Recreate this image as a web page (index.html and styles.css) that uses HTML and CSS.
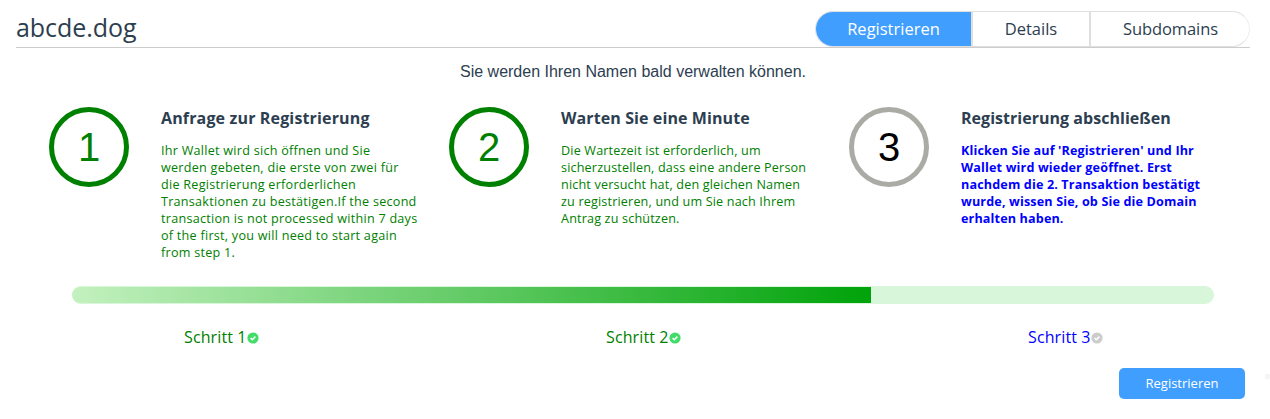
FILE: index.html
```html
<!DOCTYPE html>
<html lang="de">
<head>
<meta charset="utf-8">
<title>abcde.dog</title>
<link rel="stylesheet" href="styles.css">
</head>
<body>
<header class="header">
  <h1 class="domain">abcde.dog</h1>
  <nav class="tabs">
    <a class="tab tab-register">Registrieren</a>
    <a class="tab tab-details">Details</a>
    <a class="tab tab-subdomains">Subdomains</a>
  </nav>
</header>
<main>
  <p class="intro">Sie werden Ihren Namen bald verwalten können.</p>
  <section class="steps">
    <article class="step done request">
      <div class="number">1</div>
      <div class="info">
        <h2 class="title">Anfrage zur Registrierung</h2>
        <p class="text">Ihr Wallet wird sich öffnen und Sie<br>werden gebeten, die erste von zwei für<br>die Registrierung erforderlichen<br>Transaktionen zu bestätigen.If the second<br>transaction is not processed within 7 days<br>of the first, you will need to start again<br>from step 1.</p>
      </div>
    </article>
    <article class="step done">
      <div class="number">2</div>
      <div class="info">
        <h2 class="title">Warten Sie eine Minute</h2>
        <p class="text">Die Wartezeit ist erforderlich, um<br>sicherzustellen, dass eine andere Person<br>nicht versucht hat, den gleichen Namen<br>zu registrieren, und um Sie nach Ihrem<br>Antrag zu schützen.</p>
      </div>
    </article>
    <article class="step current">
      <div class="number">3</div>
      <div class="info">
        <h2 class="title">Registrierung abschließen</h2>
        <p class="text">Klicken Sie auf 'Registrieren' und Ihr<br>Wallet wird wieder geöffnet. Erst<br>nachdem die 2. Transaktion bestätigt<br>wurde, wissen Sie, ob Sie die Domain<br>erhalten haben.</p>
      </div>
    </article>
  </section>
  <div class="progress"><div class="bar"></div></div>
  <div class="labels">
    <div class="label label-done"><span>Schritt 1</span><svg class="check" viewBox="0 0 12 12"><circle cx="6" cy="6" r="5.6"/><path d="M3.6 6.1 5.3 7.7 8.4 4.6"/></svg></div>
    <div class="label label-done"><span>Schritt 2</span><svg class="check" viewBox="0 0 12 12"><circle cx="6" cy="6" r="5.6"/><path d="M3.6 6.1 5.3 7.7 8.4 4.6"/></svg></div>
    <div class="label label-current"><span>Schritt 3</span><svg class="check" viewBox="0 0 12 12"><circle cx="6" cy="6" r="5.6"/><path d="M3.6 6.1 5.3 7.7 8.4 4.6"/></svg></div>
  </div>
  <footer class="actions">
    <button class="submit">Registrieren</button>
    <span class="mark"></span>
  </footer>
</main>
</body>
</html>
```
FILE: styles.css
```css
* { box-sizing: border-box; }
body {
  margin: 0;
  height: 419px;
  overflow: hidden;
  background: #fff;
  color: #2c3e50;
  font-family: "Open Sans", "Noto Sans", sans-serif;
}
h1, h2, p { margin: 0; font-weight: 400; }
.header {
  display: flex;
  justify-content: space-between;
  height: 48px;
  margin: 0 20px 0 16px;
  padding-top: 11px;
  border-bottom: 1px solid #ccc;
}
.domain { font-size: 25px; line-height: 32px; letter-spacing: -0.05px; }
.tabs {
  display: flex;
  width: 435px;
  height: 36px;
  border: 1px solid #dfdfdf;
  border-right-color: #eee;
  border-radius: 18px;
  overflow: hidden;
}
.tab {
  font-size: 16.5px;
  line-height: 34px;
  text-align: center;
}
.tab-register { width: 155px; background: #409eff; color: #fff; }
.tab-details { width: 120px; border-left: 2px solid #dfdfdf; border-right: 2px solid #dfdfdf; }
.tab-subdomains { width: 158px; padding-left: 1px; letter-spacing: -0.1px; }
.intro {
  height: 59px;
  padding: 14px 4px 0 0;
  font: 16px/20px "Liberation Sans", Arial, sans-serif;
  text-align: center;
}
.steps {
  display: grid;
  grid-template-columns: repeat(3, 400px);
  height: 179px;
  padding-left: 49px;
}
.step { display: flex; gap: 32px; }
.number {
  flex: none;
  width: 80px;
  height: 80px;
  border: 5px solid #a9aba4;
  border-radius: 50%;
  color: #000;
  font: 40px/70px "Liberation Sans", Arial, sans-serif;
  text-align: center;
}
.done .number { border-color: #008000; color: #008000; }
.info { white-space: nowrap; }
.title { font-size: 16px; font-weight: 700; line-height: 22px; letter-spacing: 0.1px; }
.current .title { letter-spacing: 0.03px; }
.request .title { letter-spacing: 0.15px; }
.text { margin-top: 13px; font-size: 12.6px; line-height: 17px; letter-spacing: 0.17px; color: #008000; }
.request .text { letter-spacing: 0.26px; }
.current .text { color: #0000ff; font-weight: 700; letter-spacing: 0.14px; }
.progress {
  width: 1142px;
  height: 18px;
  margin-left: 72px;
  padding: 1px 0;
  border-radius: 9px;
  background: #d8f6da;
  overflow: hidden;
}
.bar {
  width: 799px;
  height: 16px;
  border-radius: 8px 0 0 8px;
  background: linear-gradient(90deg, #c3f1bf, #00a30a);
}
.labels {
  display: grid;
  grid-template-columns: 422px 422px 1fr;
  height: 64px;
  padding: 21px 0 0 184px;
}
.label { display: flex; height: 24px; align-items: center; font-size: 16px; line-height: 24px; letter-spacing: 0.12px; white-space: nowrap; }
.label-done { color: #008000; }
.label-current { color: #0000ff; }
.check { width: 12px; height: 12px; margin-top: 1px; fill: #42dc69; }
.label-current .check { fill: #ccc; }
.check path { fill: none; stroke: #fff; stroke-width: 1.5; }
.actions { display: flex; justify-content: flex-end; gap: 20px; }
.submit {
  width: 126px;
  height: 31px;
  padding: 0;
  border: 0;
  border-radius: 5px;
  background: #409eff;
  color: #fff;
  font: 13px/31px "Open Sans", "Noto Sans", sans-serif;
}
.mark { width: 5px; height: 5px; margin-top: 6px; background: #f5f5f5; }
```
